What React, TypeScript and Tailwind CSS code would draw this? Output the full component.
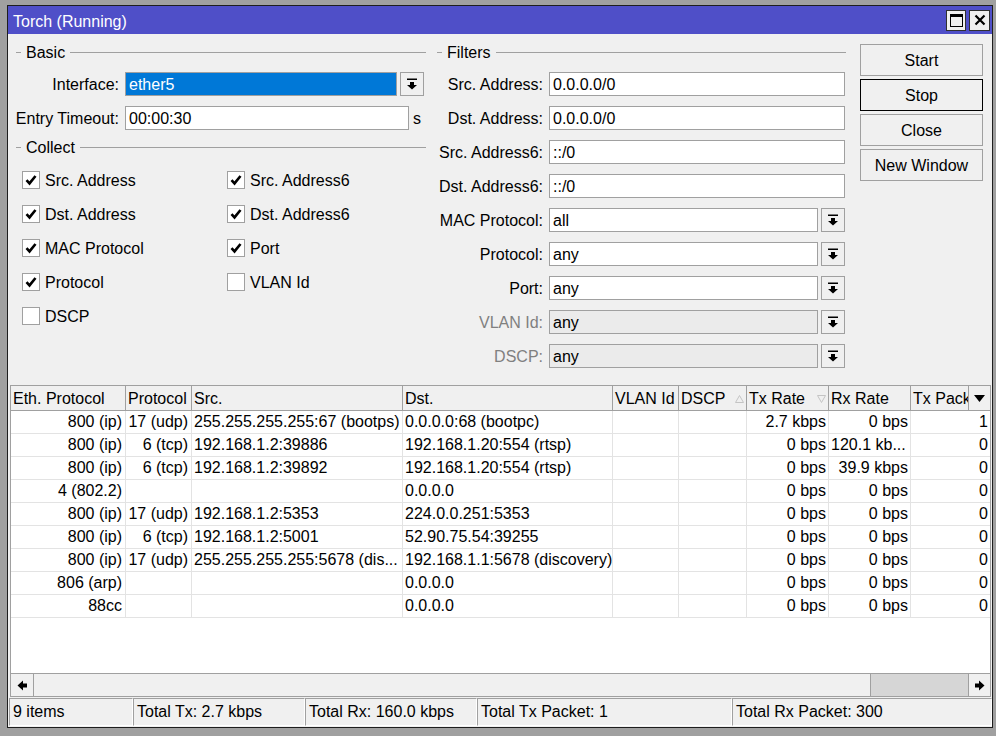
import React from "react";

const DropArrow = () => (
  <svg width="12" height="12" viewBox="0 0 12 12">
    <rect x="1" y="0.5" width="10" height="1.5" fill="#000" />
    <path d="M4 4h4v3h3L6 11.5 1 7h3z" fill="#000" />
  </svg>
);

const DropButton = () => (
  <div className="flex h-[24px] w-[24px] items-center justify-center border border-[#a0a0a0] bg-[#f0f0f0]">
    <DropArrow />
  </div>
);

const Field = ({
  value,
  width,
  selected = false,
  disabled = false,
}: {
  value: string;
  width: string;
  selected?: boolean;
  disabled?: boolean;
}) => (
  <div
    className={`flex h-[24px] items-center border border-[#a0a0a0] pl-[3px] pt-[2px] ${width} ${
      selected ? "bg-[#0078d7] text-white" : disabled ? "bg-[#ebebeb]" : "bg-white"
    }`}
  >
    {value}
  </div>
);

const GroupTitle = ({ title }: { title: string }) => (
  <div className="flex h-[20px] items-center gap-[5px]">
    <div className="h-px w-[5px] bg-[#a0a0a0]" />
    <span className="pt-[2px] leading-[18px]">{title}</span>
    <div className="h-px flex-1 bg-[#a0a0a0]" />
  </div>
);

const Check = ({ label, checked }: { label: string; checked: boolean }) => (
  <div className="flex h-[34px] items-center gap-[5px]">
    <div className="flex h-[18px] w-[18px] items-center justify-center border border-[#a0a0a0] bg-white">
      {checked && (
        <svg width="12" height="12" viewBox="0 0 12 12">
          <path d="M1.5 6.2l3 3.2L10.5 2" stroke="#000" strokeWidth="2.6" fill="none" />
        </svg>
      )}
    </div>
    <span className="whitespace-nowrap pt-[2px]">{label}</span>
  </div>
);

const Label = ({ text, width, muted = false }: { text: string; width: string; muted?: boolean }) => (
  <div className={`flex justify-end whitespace-nowrap pt-[2px] ${width} ${muted ? "text-[#808080]" : ""}`}>
    {text}
  </div>
);

const filters: { label: string; value: string; drop?: boolean; disabled?: boolean }[] = [
  { label: "Src. Address:", value: "0.0.0.0/0" },
  { label: "Dst. Address:", value: "0.0.0.0/0" },
  { label: "Src. Address6:", value: "::/0" },
  { label: "Dst. Address6:", value: "::/0" },
  { label: "MAC Protocol:", value: "all", drop: true },
  { label: "Protocol:", value: "any", drop: true },
  { label: "Port:", value: "any", drop: true },
  { label: "VLAN Id:", value: "any", drop: true, disabled: true },
  { label: "DSCP:", value: "any", drop: true, disabled: true },
];

const rows = [
  ["800 (ip)", "17 (udp)", "255.255.255.255:67 (bootps)", "0.0.0.0:68 (bootpc)", "2.7 kbps", "0 bps", "1"],
  ["800 (ip)", "6 (tcp)", "192.168.1.2:39886", "192.168.1.20:554 (rtsp)", "0 bps", "120.1 kb...", "0"],
  ["800 (ip)", "6 (tcp)", "192.168.1.2:39892", "192.168.1.20:554 (rtsp)", "0 bps", "39.9 kbps", "0"],
  ["4 (802.2)", "", "", "0.0.0.0", "0 bps", "0 bps", "0"],
  ["800 (ip)", "17 (udp)", "192.168.1.2:5353", "224.0.0.251:5353", "0 bps", "0 bps", "0"],
  ["800 (ip)", "6 (tcp)", "192.168.1.2:5001", "52.90.75.54:39255", "0 bps", "0 bps", "0"],
  ["800 (ip)", "17 (udp)", "255.255.255.255:5678 (dis...", "192.168.1.1:5678 (discovery)", "0 bps", "0 bps", "0"],
  ["806 (arp)", "", "", "0.0.0.0", "0 bps", "0 bps", "0"],
  ["88cc", "", "", "0.0.0.0", "0 bps", "0 bps", "0"],
];

const SortMark = ({ up }: { up: boolean }) => (
  <svg width="9" height="8" viewBox="0 0 9 8" className="mr-[2px]">
    <path d={up ? "M0.5 7.5h8L4.5 0.5z" : "M0.5 0.5h8L4.5 7.5z"} stroke="#c4c4c4" fill="none" />
  </svg>
);

const head = "border-r border-[#a0a0a0] pl-[2px] pt-[1px] leading-[23px] whitespace-nowrap overflow-hidden";
const cell = "border-r border-[#e3e3e3] whitespace-nowrap overflow-hidden";

export default function App() {
  return (
    <div className="h-[736px] w-[996px] bg-[#a0a0a0] pl-[7px] pt-[5px] font-['Liberation_Sans',Arial,sans-serif] text-[16px] leading-[20px] text-black">
      <div className="flex h-[723px] w-[986px] flex-col border border-[#1e1e1e] bg-[#f0f0f0]">
        {/* title bar */}
        <div className="flex h-[28px] items-center bg-[#4f4fc8] pl-[5px] pr-[2px] text-white">
          <span className="flex-1 pt-[3px]">Torch (Running)</span>
          <div className="flex gap-[3px]">
            <div className="flex h-[21px] w-[20px] items-center justify-center border border-[#303030] bg-[#f0f0f0]">
              <div className="h-[13px] w-[13px] border border-t-[3px] border-black" />
            </div>
            <div className="flex h-[21px] w-[21px] items-center justify-center border border-[#303030] bg-[#f0f0f0]">
              <svg width="12" height="12" viewBox="0 0 12 12">
                <path d="M1.5 1.5l9 9M10.5 1.5l-9 9" stroke="#000" strokeWidth="2.2" />
              </svg>
            </div>
          </div>
        </div>

        {/* settings */}
        <div className="flex h-[351px] pl-[8px] pt-[8px]">
          <div className="flex w-[410px] flex-col">
            <GroupTitle title="Basic" />
            <div className="mt-[10px] flex items-center">
              <Label text="Interface:" width="w-[103px]" />
              <div className="ml-[6px] flex gap-[3px]">
                <Field value="ether5" width="w-[272px]" selected />
                <DropButton />
              </div>
            </div>
            <div className="mt-[10px] flex items-center">
              <Label text="Entry Timeout:" width="w-[103px]" />
              <div className="ml-[6px]">
                <Field value="00:00:30" width="w-[284px]" />
              </div>
              <span className="ml-[4px] pt-[2px]">s</span>
            </div>
            <div className="mt-[7px]">
              <GroupTitle title="Collect" />
            </div>
            <div className="mt-[6px] grid grid-cols-[205px_1fr] pl-[6px]">
              <Check label="Src. Address" checked />
              <Check label="Src. Address6" checked />
              <Check label="Dst. Address" checked />
              <Check label="Dst. Address6" checked />
              <Check label="MAC Protocol" checked />
              <Check label="Port" checked />
              <Check label="Protocol" checked />
              <Check label="VLAN Id" checked={false} />
              <Check label="DSCP" checked={false} />
            </div>
          </div>

          <div className="ml-[11px] flex w-[409px] flex-col">
            <GroupTitle title="Filters" />
            <div className="mt-[10px] flex flex-col gap-[10px]">
              {filters.map((f) => (
                <div key={f.label} className="flex items-center">
                  <Label text={f.label} width="w-[106px]" muted={f.disabled} />
                  <div className="ml-[6px] flex gap-[3px]">
                    <Field value={f.value} width={f.drop ? "w-[269px]" : "w-[296px]"} disabled={f.disabled} />
                    {f.drop && <DropButton />}
                  </div>
                </div>
              ))}
            </div>
          </div>

          <div className="ml-[14px] mt-[2px] flex w-[123px] flex-col gap-[3px]">
            {["Start", "Stop", "Close", "New Window"].map((b) => (
              <div
                key={b}
                className={`flex h-[32px] items-center justify-center border bg-[#f0f0f0] pt-[2px] ${
                  b === "Stop" ? "border-black" : "border-[#a0a0a0]"
                }`}
              >
                {b}
              </div>
            ))}
          </div>
        </div>

        {/* torch table */}
        <div className="ml-[2px] flex h-[312px] w-[981px] flex-col border border-[#a0a0a0] bg-white">
          <div className="flex h-[25px] border-b border-[#a0a0a0] bg-[#f0f0f0]">
            <div className={`w-[115px] ${head}`}>Eth. Protocol</div>
            <div className={`w-[66px] ${head}`}>Protocol</div>
            <div className={`w-[211px] ${head}`}>Src.</div>
            <div className={`w-[210px] ${head}`}>Dst.</div>
            <div className={`w-[66px] ${head}`}>VLAN Id</div>
            <div className="flex w-[68px] items-center justify-between border-r border-[#a0a0a0] pl-[2px] pt-[1px]">
              DSCP
              <SortMark up />
            </div>
            <div className="flex w-[82px] items-center justify-between border-r border-[#a0a0a0] pl-[2px] pt-[1px]">
              Tx Rate
              <SortMark up={false} />
            </div>
            <div className={`w-[82px] ${head}`}>Rx Rate</div>
            <div className={`w-[58px] ${head}`}>Tx Pack</div>
            <div className="flex flex-1 items-center justify-center">
              <svg width="11" height="7" viewBox="0 0 11 7">
                <path d="M0 0h11L5.5 7z" fill="#000" />
              </svg>
            </div>
          </div>

          <div className="flex-1">
            {rows.map((r, i) => (
              <div key={i} className="flex h-[23px] border-b border-[#e3e3e3] leading-[22px]">
                <div className={`w-[115px] pr-[3px] text-right ${cell}`}>{r[0]}</div>
                <div className={`w-[66px] pr-[3px] text-right ${cell}`}>{r[1]}</div>
                <div className={`w-[211px] pl-[2px] ${cell}`}>{r[2]}</div>
                <div className={`w-[210px] pl-[2px] ${cell}`}>{r[3]}</div>
                <div className={`w-[66px] ${cell}`} />
                <div className={`w-[68px] ${cell}`} />
                <div className={`w-[82px] pr-[2px] text-right ${cell}`}>{r[4]}</div>
                <div className={`w-[82px] ${cell} ${r[5].endsWith("...") ? "pl-[2px]" : "pr-[2px] text-right"}`}>
                  {r[5]}
                </div>
                <div className="flex-1 pr-[2px] text-right">{r[6]}</div>
              </div>
            ))}
          </div>

          {/* horizontal scrollbar */}
          <div className="flex h-[23px] border-t border-[#a0a0a0] bg-[#f0f0f0]">
            <div className="flex w-[23px] items-center justify-center border-r border-[#a0a0a0]">
              <svg width="11" height="11" viewBox="0 0 11 11">
                <path d="M0.5 5.5L6 0.5v3h4v4H6v3z" fill="#000" />
              </svg>
            </div>
            <div className="flex-1" />
            <div className="w-[98px] border-l border-[#a0a0a0] bg-[#d6d6d6]" />
            <div className="flex w-[22px] items-center justify-center border-l border-[#a0a0a0]">
              <svg width="11" height="11" viewBox="0 0 11 11">
                <path d="M10.5 5.5L5 0.5v3H1v4h4v3z" fill="#000" />
              </svg>
            </div>
          </div>
        </div>

        {/* status bar */}
        <div className="ml-[1px] flex h-[29px] pt-[1px]">
          {[
            ["9 items", "w-[124px]"],
            ["Total Tx: 2.7 kbps", "w-[172px]"],
            ["Total Rx: 160.0 kbps", "w-[172px]"],
            ["Total Tx Packet: 1", "w-[255px]"],
            ["Total Rx Packet: 300", "flex-1"],
          ].map(([t, w]) => (
            <div
              key={t}
              className={`${w} flex items-center border border-b-white border-l-[#a0a0a0] border-r-white border-t-[#a0a0a0] pl-[3px]`}
            >
              {t}
            </div>
          ))}
        </div>
      </div>
    </div>
  );
}
